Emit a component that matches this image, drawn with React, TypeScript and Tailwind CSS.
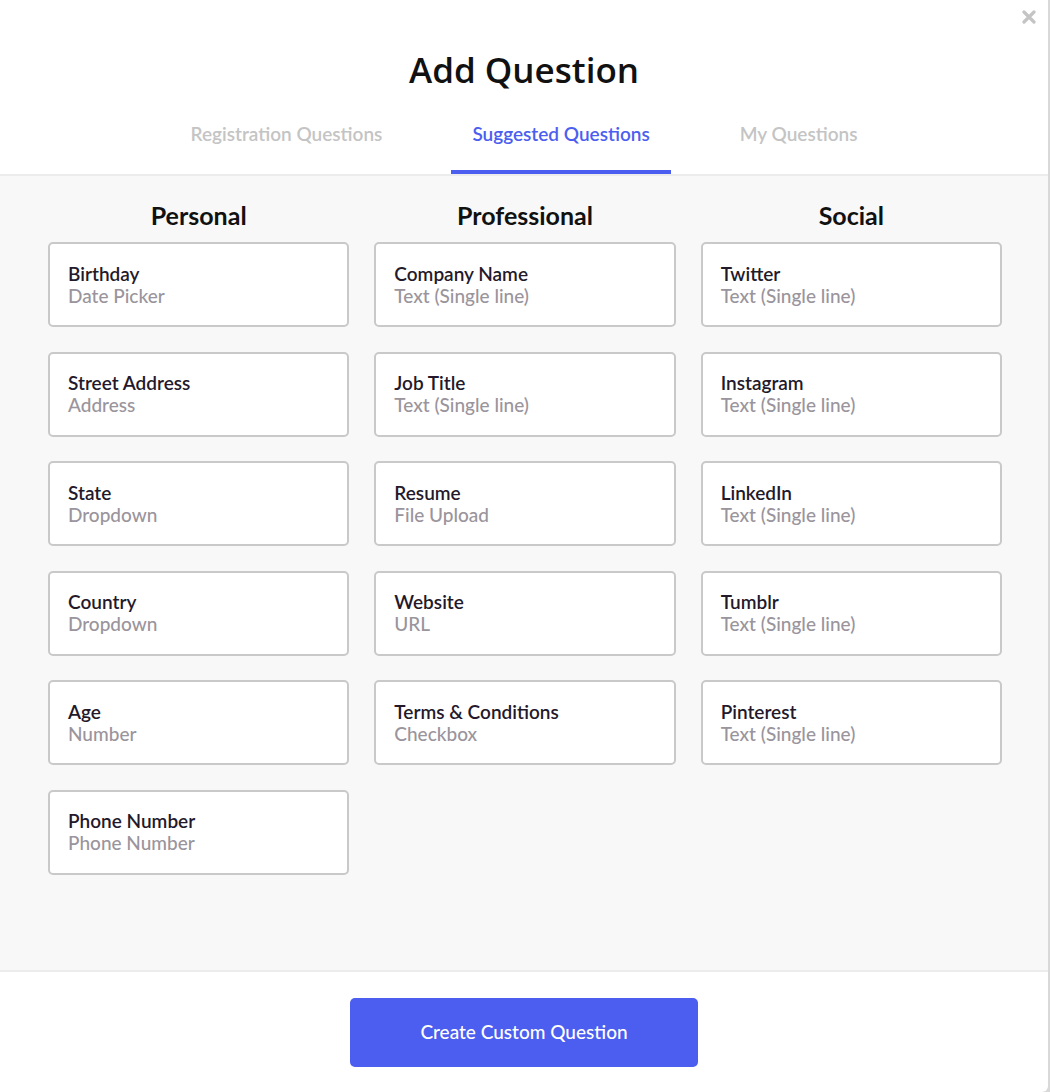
import React from "react";

interface Question {
  title: string;
  type: string;
}

const columns: { name: string; items: Question[] }[] = [
  {
    name: "Personal",
    items: [
      { title: "Birthday", type: "Date Picker" },
      { title: "Street Address", type: "Address" },
      { title: "State", type: "Dropdown" },
      { title: "Country", type: "Dropdown" },
      { title: "Age", type: "Number" },
      { title: "Phone Number", type: "Phone Number" },
    ],
  },
  {
    name: "Professional",
    items: [
      { title: "Company Name", type: "Text (Single line)" },
      { title: "Job Title", type: "Text (Single line)" },
      { title: "Resume", type: "File Upload" },
      { title: "Website", type: "URL" },
      { title: "Terms & Conditions", type: "Checkbox" },
    ],
  },
  {
    name: "Social",
    items: [
      { title: "Twitter", type: "Text (Single line)" },
      { title: "Instagram", type: "Text (Single line)" },
      { title: "LinkedIn", type: "Text (Single line)" },
      { title: "Tumblr", type: "Text (Single line)" },
      { title: "Pinterest", type: "Text (Single line)" },
    ],
  },
];

const tabs = ["Registration Questions", "Suggested Questions", "My Questions"];

const QuestionCard: React.FC<{ q: Question }> = ({ q }) => (
  <div className="h-[85px] bg-white border-2 border-[#c9c9c9] rounded-[5px] px-[18px] flex flex-col justify-center cursor-pointer">
    <div className="text-[19px] leading-[22px] font-semibold text-[#24192a]">{q.title}</div>
    <div className="text-[19px] leading-[22px] font-medium text-[#9a949c]">{q.type}</div>
  </div>
);

export default function App() {
  const active = "Suggested Questions";

  return (
    <div className="min-h-[1092px] bg-[#d9d9d9] font-['Lato','Open_Sans',sans-serif]">
      <div className="relative w-[1048px] h-[1092px] bg-white rounded-br-[6px] flex flex-col">
        {/* close */}
        <button className="absolute right-[12px] top-[10px] text-[#c4c4c4]">
          <svg width="14" height="14" viewBox="0 0 14 14">
            <path d="M2 2 L12 12 M12 2 L2 12" stroke="currentColor" strokeWidth="3.2" strokeLinecap="round" />
          </svg>
        </button>

        {/* header */}
        <div className="h-[176px] border-b-2 border-[#ececec] flex flex-col items-center">
          <h1 className="mt-[47px] text-[35px] leading-[46px] font-semibold text-[#111] font-['Open_Sans',sans-serif]">
            Add Question
          </h1>
          <div className="mt-auto flex gap-[48px]">
            {tabs.map((t) => (
              <div
                key={t}
                className={
                  t === active
                    ? "px-[21px] pb-[24px] border-b-4 border-[#4b5ef0] text-[19px] leading-[24px] font-semibold text-[#4b5ef0]"
                    : "px-[21px] pb-[24px] border-b-4 border-transparent text-[19px] leading-[24px] font-semibold text-[#c4c4c4]"
                }
              >
                {t}
              </div>
            ))}
          </div>
        </div>

        {/* body */}
        <div className="h-[796px] bg-[#f8f8f8] border-b-2 border-[#ececec] pt-[23px] pl-[48px] pr-[46px]">
          <div className="grid grid-cols-3 gap-x-[25px]">
            {columns.map((col) => (
              <div key={col.name} className="flex flex-col">
                <h2 className="text-center text-[25px] leading-[32px] font-bold text-[#111] mb-[11px]">{col.name}</h2>
                <div className="flex flex-col gap-[24.6px]">
                  {col.items.map((q) => (
                    <QuestionCard key={q.title} q={q} />
                  ))}
                </div>
              </div>
            ))}
          </div>
        </div>

        {/* footer */}
        <div className="flex-1 flex items-center justify-center">
          <button className="w-[348px] h-[69px] bg-[#4b5ef0] rounded-[5px] text-white text-[19px] font-medium">
            Create Custom Question
          </button>
        </div>
      </div>
    </div>
  );
}
